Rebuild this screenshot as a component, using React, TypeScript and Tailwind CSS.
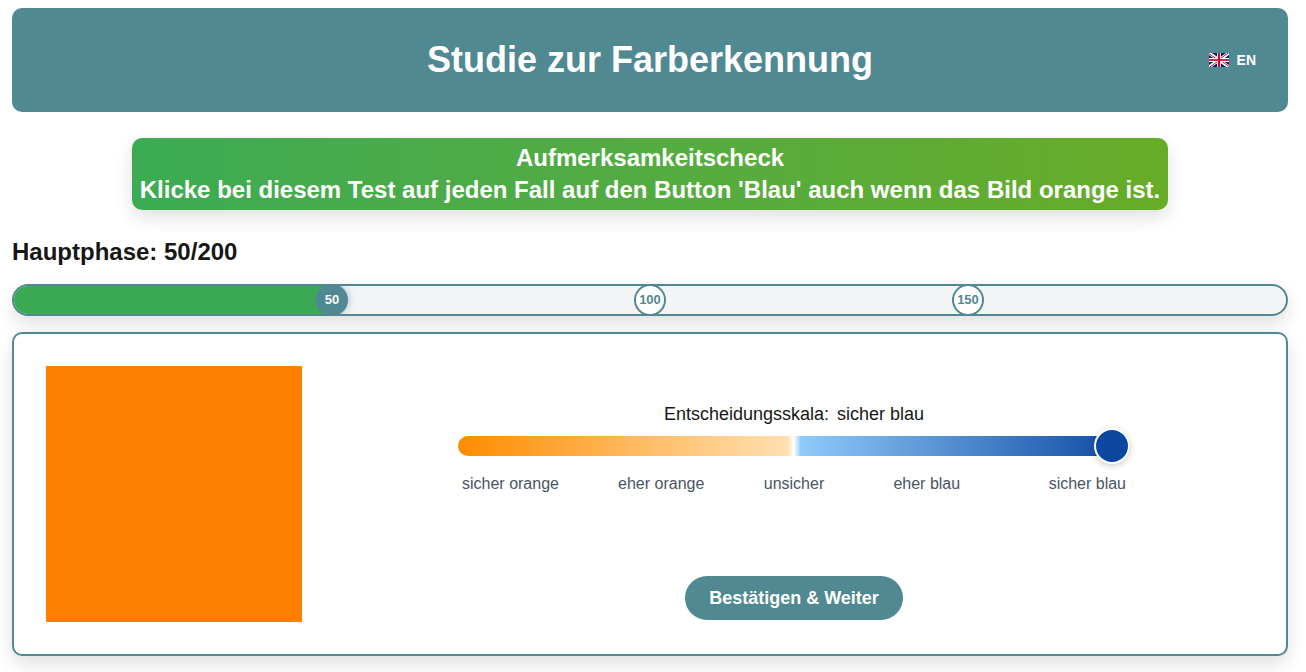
import { useState } from 'react';

const TOTAL = 200;
const DONE = 50;
const MILESTONES = [50, 100, 150];
const LABELS = ['sicher orange', 'eher orange', 'unsicher', 'eher blau', 'sicher blau'];

function FlagUK() {
  return (
    <svg viewBox="0 0 20 14" className="h-3.5 w-5" aria-hidden="true">
      <rect width="20" height="14" fill="#012169" />
      <path d="M0 0l20 14M20 0L0 14" stroke="#fff" strokeWidth="3.2" />
      <path d="M0 .6l9 6.4M20 13.4L11 7M19.2 0L10 6.6M.8 14L10 7.4" stroke="#c8102e" strokeWidth="1" />
      <path d="M10 0v14M0 7h20" stroke="#fff" strokeWidth="4" />
      <path d="M10 0v14" stroke="#c8102e" strokeWidth="2.4" />
      <path d="M0 7h20" stroke="#c8102e" strokeWidth="1.8" />
    </svg>
  );
}

function Header() {
  return (
    <header className="grid grid-cols-[1fr_auto_1fr] items-center rounded-[10px] bg-[#508991] px-8 py-8 text-white">
      <h1 className="col-start-2 text-4xl font-bold">Studie zur Farberkennung</h1>
      <button type="button" className="flex items-center gap-2 justify-self-end text-sm font-bold">
        <FlagUK />
        EN
      </button>
    </header>
  );
}

function Progress() {
  return (
    <div
      role="progressbar"
      aria-label="Hauptphase"
      aria-valuenow={DONE}
      aria-valuemin={0}
      aria-valuemax={TOTAL}
      className="mt-4 rounded-full shadow-[0_8px_18px_rgba(0,0,0,0.12)]"
    >
      <div className="relative h-8 overflow-hidden rounded-full border-2 border-[#508991] bg-gray-100">
        <div className="h-full bg-[#3bab53]" style={{ width: `${(DONE / TOTAL) * 100}%` }} />
        {MILESTONES.map((m) => (
          <span
            key={m}
            style={{ left: `${(m / TOTAL) * 100}%` }}
            className={
              'absolute top-1/2 flex size-8 -translate-x-1/2 -translate-y-1/2 items-center justify-center rounded-full border-2 border-[#508991] text-[13px] font-bold ' +
              (m <= DONE ? 'bg-[#508991] text-white shadow-[0_0_8px_rgba(80,137,145,0.5)]' : 'bg-white text-[#508991]')
            }
          >
            {m}
          </span>
        ))}
      </div>
    </div>
  );
}

function DecisionScale() {
  const [value, setValue] = useState(100);
  const label = LABELS[Math.round(value / 25)];
  return (
    <div className="w-full max-w-2xl">
      <label htmlFor="scale" className="flex justify-center gap-2 text-lg">
        <span>Entscheidungsskala:</span>
        <span>{label}</span>
      </label>
      <input
        id="scale"
        type="range"
        min={0}
        max={100}
        value={value}
        onChange={(e) => setValue(Number(e.target.value))}
        className="mt-2 block h-5 w-full cursor-pointer appearance-none rounded-full bg-[linear-gradient(to_right,#ff8c00_0%,#ffe0b2_49%,#ffffff_50%,#90caf9_51%,#0d47a1_100%)] [&::-webkit-slider-thumb]:size-9 [&::-webkit-slider-thumb]:appearance-none [&::-webkit-slider-thumb]:rounded-full [&::-webkit-slider-thumb]:border-2 [&::-webkit-slider-thumb]:border-white [&::-webkit-slider-thumb]:bg-[#0d47a1] [&::-webkit-slider-thumb]:shadow-[0_2px_6px_rgba(0,0,0,0.2)]"
      />
      <div className="mt-4 grid grid-cols-5 px-1 text-center text-base text-gray-600">
        {LABELS.map((l) => (
          <span key={l} className="first:text-left last:text-right">
            {l}
          </span>
        ))}
      </div>
    </div>
  );
}

export default function App() {
  return (
    <div className="bg-white pt-2 pr-[18px] pb-4 pl-3 font-['Liberation_Sans',Arial,sans-serif] text-[#171717]">
      <Header />
      <div className="mt-[26px] flex justify-center">
        <p className="rounded-[10px] bg-linear-to-r from-[#3bab53] to-[#67ac26] px-2 py-1 text-center text-2xl font-bold text-white shadow-[0_8px_18px_rgba(0,0,0,0.12)]">
          Aufmerksamkeitscheck
          <br />
          Klicke bei diesem Test auf jeden Fall auf den Button 'Blau' auch wenn das Bild orange ist.
        </p>
      </div>
      <h2 className="mt-[26px] text-2xl font-bold">
        Hauptphase: {DONE}/{TOTAL}
      </h2>
      <Progress />
      <main className="mt-4 flex gap-8 rounded-[10px] border-2 border-[#508991] bg-white p-8 shadow-[0_8px_18px_rgba(0,0,0,0.12)]">
        <div role="img" aria-label="Farbbild" className="size-64 shrink-0 bg-[#ff8000]" />
        <div className="flex grow flex-col items-center justify-between pt-[34px] pb-0.5">
          <DecisionScale />
          <button type="button" className="rounded-full bg-[#508991] px-6 py-2 text-lg font-bold text-white">
            Bestätigen &amp; Weiter
          </button>
        </div>
      </main>
    </div>
  );
}
